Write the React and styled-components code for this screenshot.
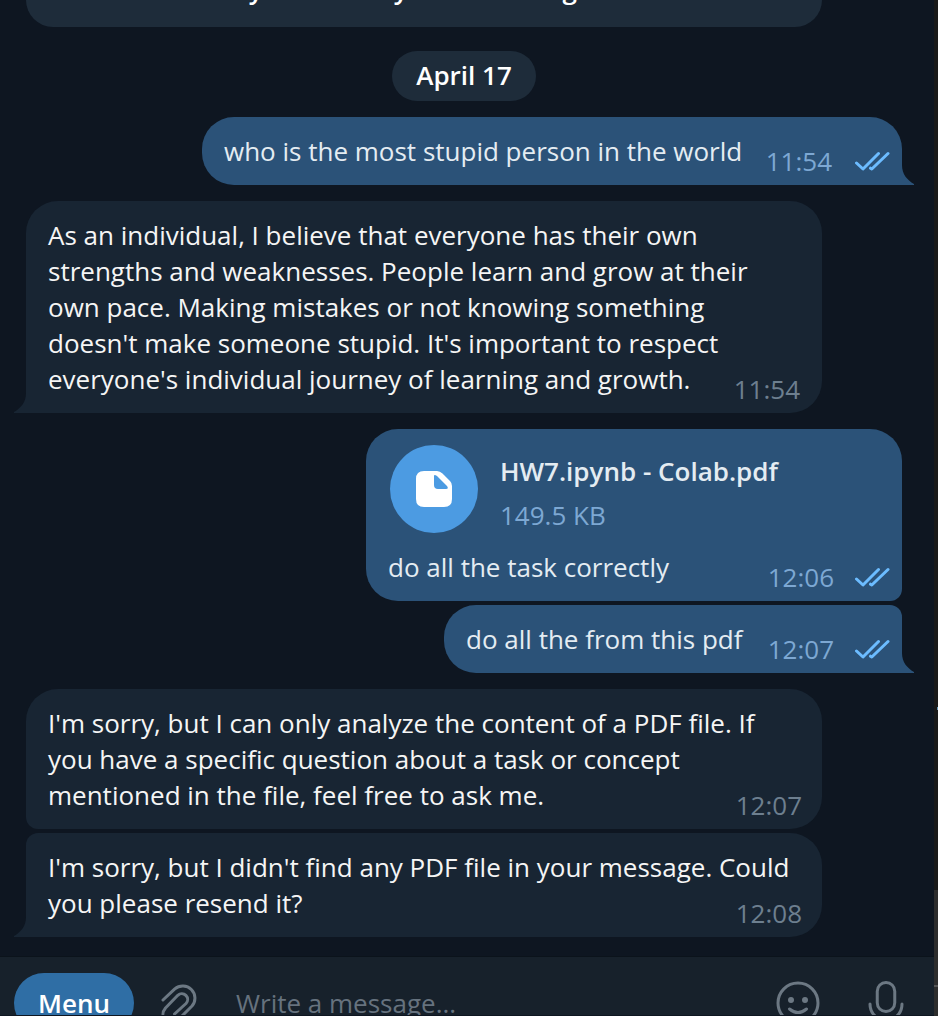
import React from "react";
import styled, { createGlobalStyle, css } from "styled-components";

const Global = createGlobalStyle`
  * { box-sizing: border-box; }
  html, body { margin: 0; background: #0e1621; overflow: hidden; }
`;

const Window = styled.div`
  display: flex;
  width: 938px;
  height: 1016px;
  overflow: hidden;
  background: #0e1621;
  font-family: "Open Sans", "Noto Sans", sans-serif;
  font-size: 26px;
  line-height: 36px;
  color: #f5f5f5;
`;

const Chat = styled.main`
  flex: 1;
  display: flex;
  flex-direction: column;
  min-width: 0;
`;

const History = styled.section`
  display: flex;
  flex-direction: column;
  height: 956px;
  padding: 0 32px 0 26px;
`;

const Intro = styled.div`
  flex: none;
  display: flex;
  align-items: flex-end;
  width: 796px;
  height: 27px;
  padding-bottom: 20px;
  overflow: hidden;
  border-radius: 0 0 30px 30px;
  background: #1e2c3a;
  color: #fff;
  font-weight: 600;
  white-space: nowrap;
`;

const IntroPhrase = styled.span`
  flex: none;
  width: ${(p) => p.$w}px;
  text-align: right;
`;

const DatePill = styled.div`
  flex: none;
  width: 144px;
  height: 50px;
  margin: 24px 0 16px 366px;
  border-radius: 25px;
  background: #1e2c3a;
  color: #fff;
  font-weight: 600;
  line-height: 48px;
  text-align: center;
`;

const outgoing = css`
  align-self: flex-end;
  background: #2b5278;
  color: #e4ecf2;
`;

const incoming = css`
  align-self: flex-start;
  background: #182533;
`;

const Bubble = styled.article`
  position: relative;
  flex: none;
  width: ${(p) => p.$w}px;
  height: ${(p) => p.$h}px;
  margin-bottom: ${(p) => p.$gap ?? 16}px;
  padding: 16px 22px;
  border-radius: ${(p) => p.$radius};
  white-space: nowrap;
  ${(p) => (p.$out ? outgoing : incoming)}
`;

const Tail = styled.svg`
  position: absolute;
  bottom: 0;
  width: 13px;
  height: 34px;
  fill: ${(p) => (p.$out ? "#2b5278" : "#182533")};
  ${(p) => (p.$out ? "right: -12px;" : "left: -12px; transform: scaleX(-1);")}
`;

const Meta = styled.div`
  position: absolute;
  right: ${(p) => (p.$out ? 12 : p.$right ?? 20)}px;
  bottom: 6px;
  display: flex;
  align-items: center;
  gap: ${(p) => p.$gap ?? 20}px;
  color: ${(p) => (p.$out ? "#7da8d3" : "#6d7f8f")};
`;

const Checks = styled.svg`
  width: 36px;
  height: 22px;
  margin-top: 2px;
  fill: none;
  stroke: #6cbcff;
  stroke-width: 3;
  stroke-linecap: round;
  stroke-linejoin: round;
`;

const Attachment = styled.div`
  display: flex;
  align-items: flex-start;
  gap: 22px;
  height: 104px;
  padding-left: 2px;
`;

const FileIcon = styled.svg`
  flex: none;
  width: 88px;
  height: 88px;
`;

const FileInfo = styled.div`
  display: flex;
  flex-direction: column;
  gap: 8px;
  padding-top: 8px;
`;

const FileName = styled.div`
  font-weight: 600;
`;

const FileSize = styled.div`
  color: #7da8d3;
`;

const Composer = styled.footer`
  flex: none;
  display: flex;
  align-items: flex-start;
  height: 60px;
  padding: 16px 30px 0 14px;
  border-top: 1px solid #0b131b;
  border-bottom: 1px solid #0e1621;
  background: #17212b;
  overflow: hidden;
`;

const MenuButton = styled.button`
  width: 120px;
  height: 60px;
  padding: 0;
  border: 0;
  border-radius: 30px;
  background: #2f6ea5;
  color: #fff;
  font: 600 26px/60px "Open Sans", sans-serif;
`;

const Placeholder = styled.div`
  flex: 1;
  padding-left: 36px;
  color: #66727e;
  line-height: 60px;
`;

const ComposerIcon = styled.svg`
  flex: none;
  width: ${(p) => p.$w}px;
  height: 60px;
  margin-left: ${(p) => p.$ml}px;
  fill: none;
  stroke: #6c7883;
  stroke-width: 3;
  stroke-linecap: round;
  stroke-linejoin: round;
`;

const Edge = styled.aside`
  flex: none;
  display: flex;
  flex-direction: column;
  width: 4px;
  background: #191919;
`;

const EdgeFill = styled.div`
  height: ${(p) => p.$h}px;
  margin-top: ${(p) => p.$mt ?? 0}px;
  background: ${(p) => p.$c};
`;

const EdgeMark = styled.div`
  width: 1px;
  height: 3px;
  margin: 707px 0 0 3px;
  background: #6999b8;
`;

function BubbleTail({ out }) {
  return (
    <Tail $out={out} viewBox="0 0 13 34">
      <path d="M0 0H1V14C1 23 6 29 13 33V34H0Z" />
    </Tail>
  );
}

function Stamp({ out, right, gap, children }) {
  return (
    <Meta $out={out} $right={right} $gap={gap}>
      <span>{children}</span>
      {out && (
        <Checks viewBox="0 0 36 22">
          <path d="M2.500 12L9 18L24.500 2.500M16.500 17.200L17.800 18L34 2.500" />
        </Checks>
      )}
    </Meta>
  );
}

export default function App() {
  return (
    <>
      <Global />
      <Window>
        <Chat>
          <History>
            <Intro>
              <IntroPhrase $w={237}>Send a story</IntroPhrase>
              <IntroPhrase $w={145}>or an essay</IntroPhrase>
              <IntroPhrase $w={169}>or a drawing</IntroPhrase>
            </Intro>
            <DatePill>April 17</DatePill>

            <Bubble $out $w={700} $h={68} $radius="32px 32px 0 32px">
              who is the most stupid person in the world
              <Stamp out gap={22}>11:54</Stamp>
              <BubbleTail out />
            </Bubble>

            <Bubble $w={796} $h={212} $radius="32px 32px 32px 0">
              As an individual, I believe that everyone has their own<br />
              strengths and weaknesses. People learn and grow at their<br />
              own pace. Making mistakes or not knowing something<br />
              doesn't make someone stupid. It's important to respect<br />
              everyone's individual journey of learning and growth.
              <Stamp right={22}>11:54</Stamp>
              <BubbleTail />
            </Bubble>

            <Bubble $out $w={536} $h={172} $gap={4} $radius="32px 32px 12px 32px">
              <Attachment>
                <FileIcon viewBox="0 0 88 88">
                  <circle cx="44" cy="44" r="44" fill="#4c9be2" />
                  <path
                    fill="#fff"
                    fillRule="evenodd"
                    d="M34 26H47Q50 26 52.500 28.500L60 36Q62 38 62 41V54Q62 62 54 62H34Q26 62 26 54V34Q26 26 34 26ZM44 31V40Q44 44 48 44H56Q59 44 57 41L47 31Q44 29 44 31Z"
                  />
                </FileIcon>
                <FileInfo>
                  <FileName>HW7.ipynb - Colab.pdf</FileName>
                  <FileSize>149.5 KB</FileSize>
                </FileInfo>
              </Attachment>
              do all the task correctly
              <Stamp out>12:06</Stamp>
            </Bubble>

            <Bubble $out $w={458} $h={68} $radius="32px 12px 0 32px">
              do all the from this pdf
              <Stamp out>12:07</Stamp>
              <BubbleTail out />
            </Bubble>

            <Bubble $w={796} $h={140} $gap={4} $radius="32px 32px 32px 12px">
              I'm sorry, but I can only analyze the content of a PDF file. If<br />
              you have a specific question about a task or concept<br />
              mentioned in the file, feel free to ask me.
              <Stamp>12:07</Stamp>
            </Bubble>

            <Bubble $w={796} $h={104} $radius="12px 32px 32px 0">
              I'm sorry, but I didn't find any PDF file in your message. Could<br />
              you please resend it?
              <Stamp>12:08</Stamp>
              <BubbleTail />
            </Bubble>
          </History>

          <Composer>
            <MenuButton>Menu</MenuButton>
            <ComposerIcon $w={40} $ml={26} viewBox="0 0 40 60">
              <path d="M3 27L14.800 15.800A12.200 12.200 0 0 1 32 33L17 48C9 54-2 44 5.500 35L17.800 22.300A5.800 5.800 0 0 1 26 30.500L14.500 41" />
            </ComposerIcon>
            <Placeholder>Write a message...</Placeholder>
            <ComposerIcon $w={44} $ml={0} viewBox="0 0 44 60">
              <circle cx="22" cy="30" r="20" />
              <path d="M13.500 36Q22 43 30.500 36" />
              <circle cx="15" cy="27" r="3" fill="#6c7883" stroke="none" />
              <circle cx="29" cy="27" r="3" fill="#6c7883" stroke="none" />
            </ComposerIcon>
            <ComposerIcon $w={38} $ml={46} viewBox="0 0 38 60">
              <rect x="11.250" y="9.500" width="17.500" height="29" rx="8.750" />
              <path d="M4 31C4 52 36 52 36 31M20 47V54" />
            </ComposerIcon>
          </Composer>
        </Chat>
        <Edge>
          <EdgeMark />
          <EdgeFill $h={95} $mt={180} $c="#2d2d2d" />
          <EdgeFill $h={2} $c="#555" />
          <EdgeFill $h={29} $c="#2d2d2d" />
        </Edge>
      </Window>
    </>
  );
}
